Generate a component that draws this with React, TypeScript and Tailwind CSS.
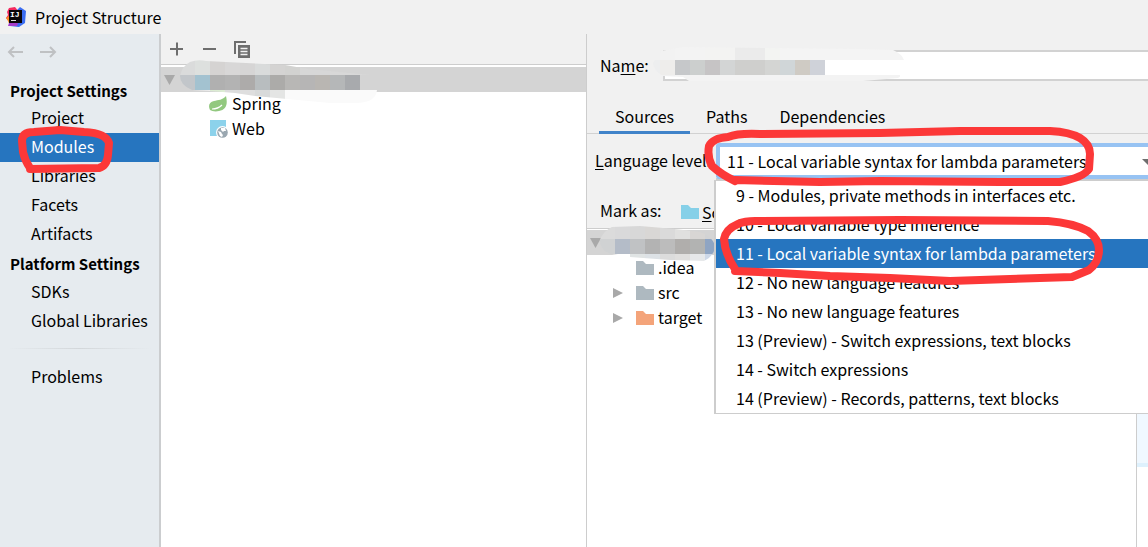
import { useId, useState } from 'react'
import clsx from 'clsx'

const projectSettings = ['Project', 'Modules', 'Libraries', 'Facets', 'Artifacts']
const platformSettings = ['SDKs', 'Global Libraries']
const tabs = ['Sources', 'Paths', 'Dependencies']
const levels = [
    '9 - Modules, private methods in interfaces etc.',
    '10 - Local variable type inference',
    '11 - Local variable syntax for lambda parameters',
    '12 - No new language features',
    '13 - No new language features',
    '13 (Preview) - Switch expressions, text blocks',
    '14 - Switch expressions',
    '14 (Preview) - Records, patterns, text blocks',
]

// Rows of mosaic cells clipped to a hand painted blob: [y, height, first x, colors]
type MosaicRow = [number, number, number, string[]]

function Smudge({ width, height, shape, rows, className }: { width: number; height: number; shape: string; rows: MosaicRow[]; className: string }) {
    const id = useId()
    return (
        <svg aria-hidden="true" width={width} height={height} className={clsx('pointer-events-none absolute max-w-none', className)} shapeRendering="crispEdges">
            <clipPath id={id}><path d={shape} /></clipPath>
            <g clipPath={`url(#${id})`}>
                {rows.map(([y, h, x, colors]) => colors.map((color, i) => (
                    <rect key={`${y}-${i}`} x={x + i * 15} y={y} width={15} height={h} fill={color} />
                )))}
            </g>
        </svg>
    )
}

function IdeaLogo() {
    return (
        <svg width="20" height="20" viewBox="0 0 20 20" aria-hidden="true">
            <path d="M3 1 9 0l4 5-2 11-9-3L0 11l2-3-1-3z" fill="#f5295f" />
            <path d="M0 11 4 8l6 10-6 1-2-5z" fill="#fb8a26" />
            <path d="M11 3 14 0l6 4-1 12-6 4-9-1 7-7z" fill="#3b6cf0" />
            <path d="m2 19 2-6 8 3-1 3z" fill="#a63cc9" />
            <rect x="3" y="3" width="13" height="13" fill="#0a0508" />
            <text x="4" y="10" fontSize="8" fontWeight="700" fill="#fff" fontFamily="Liberation Mono, monospace">IJ</text>
            <path d="M5 13.5h5" stroke="#ddd" strokeWidth="1" />
        </svg>
    )
}

function Arrow({ back }: { back?: boolean }) {
    return (
        <svg width="17" height="14" viewBox="0 0 17 14" fill="none" stroke="#bfc1c3" strokeWidth="2" aria-hidden="true">
            {back ? <path d="M16 7H2M7 2 2 7l5 5" /> : <path d="M0 7h15M10 2l5 5-5 5" />}
        </svg>
    )
}

function CopyIcon() {
    return (
        <svg width="16" height="17" viewBox="0 0 16 17" fill="none" aria-hidden="true">
            <path d="M1 13V1h11" stroke="#6e6e6e" strokeWidth="2" />
            <path d="M4 4h12v13H4z" fill="#6e6e6e" />
            <path d="M6.500 7.500h7M6.500 10.500h7M6.500 13.500h7" stroke="#f1f1f1" strokeWidth="1.500" />
        </svg>
    )
}

function SpringIcon() {
    return (
        <svg width="18" height="16" viewBox="0 0 18 16" aria-hidden="true">
            <path d="M17 0c2 9 0 14-7 15-4 1-7 0-9-1C-1 10 0 6 5 5c4-1 9-1 12-5z" fill="#92c87f" />
            <path d="M3 13c5 0 8-2 10-4" fill="none" stroke="#fff" strokeWidth="1.200" />
        </svg>
    )
}

function WebIcon() {
    return (
        <svg width="18" height="18" viewBox="0 0 18 18" aria-hidden="true">
            <path d="M0 0h16v16H0z" fill="#8cd2eb" />
            <circle cx="12.500" cy="12.500" r="6.500" fill="#fff" />
            <circle cx="12.500" cy="12.500" r="5.300" fill="#9aa7b0" />
            <path d="m8 11 3 1 1 2 1 1-1 2-2-1zM11 8l4 0 1 3-2 0-1 1-2-2z" fill="#fff" />
        </svg>
    )
}

function Folder({ color }: { color: string }) {
    return (
        <svg width="18" height="14" viewBox="0 0 18 14" aria-hidden="true" className="shrink-0">
            <path d="M0 0h7l3 3h8v11H0z" fill={color} />
        </svg>
    )
}

function Caret({ open }: { open?: boolean }) {
    return (
        <svg width="11" height="12" viewBox="0 0 11 12" aria-hidden="true" className="shrink-0">
            <path d={open ? 'M0 1h11L5.500 11z' : 'M1 1v10l10-5z'} fill="#a9a9a9" />
        </svg>
    )
}

function Sidebar() {
    const [active, setActive] = useState('Modules')
    const item = (name: string) => (
        <li key={name}>
            <button onClick={() => setActive(name)} className={clsx('block h-[29px] w-full pb-0.5 pl-[31px] text-left leading-[27px]', active === name && 'bg-[#2675bf] text-white')}>
                {name}
            </button>
        </li>
    )

    return (
        <nav className="w-[161px] shrink-0 border-r-2 border-[#cbcdcf] bg-[#e6ebef]">
            <div className="flex h-[44px] gap-4 px-[7px] pt-[11px]">
                <button aria-label="Back" className="h-[14px]"><Arrow back /></button>
                <button aria-label="Forward" className="h-[14px]"><Arrow /></button>
            </div>
            <h2 className="h-[26px] pl-[10px] text-[15px] font-bold leading-[26px]">Project Settings</h2>
            <ul>{projectSettings.map(item)}</ul>
            <h2 className="h-[29px] pl-[10px] text-[15px] font-bold leading-[29px]">Platform Settings</h2>
            <ul>{platformSettings.map(item)}</ul>
            <div className="mx-2 mt-3 h-px bg-linear-to-r from-transparent via-[#d3d7da] to-transparent" />
            <ul className="mt-[14px]">{item('Problems')}</ul>
        </nav>
    )
}

function ModuleTree() {
    return (
        <section className="flex w-[426px] shrink-0 flex-col border-r border-[#cdcdcd]">
            <div className="flex h-[31px] items-center border-b border-[#cdcdcd] pl-[7px]">
                <button aria-label="Add" className="w-[33px]">
                    <svg width="16" height="14" viewBox="0 0 16 14" stroke="#6e6e6e" strokeWidth="2"><path d="M2 7h13M9 .5v13" /></svg>
                </button>
                <button aria-label="Remove" className="w-[33px]">
                    <svg width="16" height="14" viewBox="0 0 16 14" stroke="#6e6e6e" strokeWidth="2"><path d="M2 7h13" /></svg>
                </button>
                <button aria-label="Copy" className="h-[18px]"><CopyIcon /></button>
            </div>
            <div className="grow bg-white pt-[2px] leading-[25px]">
                <div className="relative flex h-[25px] items-center bg-[#d4d4d4] pl-[3px]">
                    <Caret open />
                    <Smudge
                        className="-top-[7px] left-[19px]"
                        width={200}
                        height={45}
                        shape="M10 2Q18 -1 26 1L105 5L128 9L190 15L190 30L197 30Q196 42 178 43L150 43L75 36L55 33L30 31L12 30Q0 25 0 16Q2 6 10 2Z"
                        rows={[
                            [0, 15, 0, ['#dadbdb', '#dde0de', '#d5d3d2', '#d8d7d7', '#d6d5d5', '#d9dbdb', '#d4d3d2', '#d2d2d0', '#d7d7d7', '#d7d7d7', '#d8d8d8', '#d8d8d8', '#d8d8d8']],
                            [15, 15, 0, ['#c2c6ca', '#a3c2d0', '#b0b0b0', '#b3b3b3', '#adabaa', '#b8bdbf', '#acaba9', '#b8b7b5', '#b6b5b5', '#b9b6b2', '#b5b7b8', '#a8aaad']],
                            [30, 15, 0, ['#ededed', '#ededed', '#dcecd3', '#dcdcdc', '#dedede', '#d8dada', '#e4e5e4', '#fafafa', '#fafafa', '#fafafa', '#fafafa', '#fafafa', '#fafafa', '#fafafa']],
                        ]}
                    />
                </div>
                <div className="relative flex h-[25px] items-center gap-[5px] pb-0.5 pl-12"><SpringIcon />Spring</div>
                <div className="flex h-[25px] items-center gap-1 pb-0.5 pl-[49px]"><WebIcon />Web</div>
            </div>
        </section>
    )
}

function LanguageLevel() {
    const [level, setLevel] = useState(levels[2])
    return (
        <div className="mt-2 flex h-[38px] items-center pl-2">
            <label htmlFor="level" className="w-[121px] shrink-0 pb-0.5"><u className="underline-offset-2">L</u>anguage level:</label>
            <div className="relative h-[38px] grow border-b-2 border-[#cdcdcd]">
                <select
                    id="level"
                    value={level}
                    onChange={(e) => setLevel(e.target.value)}
                    className="mt-px h-[36px] w-full appearance-none rounded-l-sm border-4 border-r-0 border-[#97c3f3] bg-white pl-[7px] outline-none"
                >
                    {levels.map((name) => <option key={name}>{name}</option>)}
                </select>
                <svg width="6" height="6" viewBox="0 0 6 6" className="pointer-events-none absolute top-[17px] right-0" aria-hidden="true">
                    <path d="M0 0h12L6 6z" fill="#6e6e6e" />
                </svg>
                <ul className="absolute top-[38px] right-0 -left-[2px] z-10 border border-r-0 border-l-2 border-[#cdcdcd] bg-white">
                    {levels.map((name) => (
                        <li key={name}>
                            <button onClick={() => setLevel(name)} className={clsx('block h-[29px] w-full pl-5 text-left', level === name && 'bg-[#2675bf] text-white')}>
                                {name}
                            </button>
                        </li>
                    ))}
                </ul>
            </div>
        </div>
    )
}

function ModuleEditor() {
    const [tab, setTab] = useState('Sources')
    return (
        <section className="flex min-w-0 grow flex-col">
            <div className="relative mt-4 flex h-[31px] items-center pl-[13px]">
                <label htmlFor="name" className="w-[63px] shrink-0">Na<u className="underline-offset-2">m</u>e:</label>
                <input id="name" className="h-[31px] min-w-0 grow border-2 border-r-0 border-[#d2d2d2] bg-white px-2 outline-none" />
                <Smudge
                    className="-top-[4px] left-[66px]"
                    width={252}
                    height={35}
                    shape="M8 5L30 1L210 3L240 4Q249 8 251 14L251 28L245 32L210 35L36 35L30 31L10 30Q0 24 0 17Z"
                    rows={[
                        [0, 14, 7, ['#f2f2f2', '#f3f3f3', '#f3f3f3', '#f3f3f2', '#f3f3f2', '#ebebeb', '#ebebeb', '#f3f4f2', '#f4f4f4', '#f4f4f4', '#f4f4f4', '#f4f4f4', '#f4f4f4', '#f4f4f4', '#f4f4f4', '#f4f4f4', '#f4f4f4']],
                        [14, 15, -8, ['#edeeef', '#eeedeb', '#c6c8ca', '#cccfce', '#c6c4c5', '#d3d5d5', '#cfcfcd', '#cfcfcd', '#d4d5d3', '#d0d6d8', '#cfcbc4', '#cfd2d9', '#fff', '#fff', '#fff', '#fff', '#fff', '#fff']],
                        [29, 6, -8, ['#f1f1f1', '#f1f1f1', '#f3f3f3', '#f3f3f3', '#f3f3f3', '#f3f3f3', '#f3f3f3', '#f3f3f3', '#f3f3f3', '#f3f3f3', '#f3f3f3', '#f3f3f3', '#f3f3f3', '#f3f3f3', '#f3f3f3', '#f3f3f3', '#f3f3f3']],
                    ]}
                />
            </div>
            <div className="mt-5 flex h-[33px] border-b border-[#d2d2d2] pl-3" role="tablist">
                {tabs.map((name) => (
                    <button
                        key={name}
                        role="tab"
                        aria-selected={tab === name}
                        onClick={() => setTab(name)}
                        className={clsx('h-[33px] border-b-3 px-4', tab === name ? 'border-[#4083c9]' : 'border-transparent')}
                    >
                        {name}
                    </button>
                ))}
            </div>
            <LanguageLevel />
            <div className="flex h-[48px] items-end pb-[3px] pl-[13px]">
                <span className="w-[81px]">Mark as:</span>
                <button className="flex items-center gap-[3px] leading-[26px]"><Folder color="#86d0e8" /><span><u className="underline-offset-2">S</u>ources</span></button>
            </div>
            <div className="flex grow border-t border-[#cdcdcd] bg-white leading-[25px]">
                <div className="grow border-r border-[#cdcdcd] pt-px">
                    <div className="relative flex h-[25px] items-center bg-[#d4d4d4] pl-[3px]">
                        <Caret open />
                        <Smudge
                            className="-top-[4px] left-[13px]"
                            width={116}
                            height={36}
                            shape="M12 1L40 0L75 3L100 6Q115 12 115 22Q113 31 104 35L70 34L30 31L12 28Q0 25 0 14Q3 5 12 1Z"
                            rows={[
                                [0, 13, 0, ['#dbdbdb', '#d9d9da', '#d8d8d8', '#d9d7d5', '#dadada', '#e0e0df', '#d8d6d4', '#d2d3d4']],
                                [13, 15, 0, ['#d0d2d3', '#b4bcc8', '#c0c2c4', '#b3b3b3', '#bcbcbc', '#b0aeac', '#b2b3b2', '#8fa5c3']],
                                [28, 8, 0, ['#fff', '#fff', '#e0e4e4', '#dde2e6', '#dcdcdc', '#e0dfde', '#e6e8ea', '#cdd8e8']],
                            ]}
                        />
                    </div>
                    <div className="flex h-[25px] items-center gap-1 pl-[49px]"><Folder color="#aeb9c0" />.idea</div>
                    <div className="flex h-[25px] items-center gap-1 pl-[25px]"><Caret /><span className="w-[5px]" /><Folder color="#aeb9c0" />src</div>
                    <div className="flex h-[25px] items-center gap-1 pl-[25px]"><Caret /><span className="w-[5px]" /><Folder color="#f4a47a" />target</div>
                </div>
                <div className="w-[11px] shrink-0">
                    <div className="h-[238px] border-b-4 border-[#def1fd] bg-[#f0f8ff]" />
                </div>
            </div>
        </section>
    )
}

// Red pen rings round the selected module entry and the language level
function Marks() {
    return (
        <svg width="1148" height="300" className="pointer-events-none absolute top-0 left-0 z-20 max-w-none" fill="none" stroke="#fc3838" strokeWidth="8" strokeLinecap="round" strokeLinejoin="round" aria-hidden="true">
            <path d="M30 168Q25 161 23 152L22 141Q22 132 34 132L60 130 84 132Q106 133 109 143L108 155Q107 166 99 168L30 169" />
            <path d="M735 181Q722 175 712 166Q707 157 709 146Q713 138 728 137Q738 133 760 134L880 133 960 131 1050 131Q1070 132 1080 138Q1090 144 1090 154L1089 169Q1084 177 1060 182L1000 182 880 181 820 182 735 180" />
            <path d="M735 269Q725 254 724 239Q726 229 738 224Q745 221 755 221L900 220 1048 221Q1073 223 1088 231Q1099 239 1099 250Q1099 262 1089 270L1072 277 1010 279 950 281 890 278 830 276 780 273 735 271" />
        </svg>
    )
}

export default function App() {
    return (
        <div className="relative flex min-h-screen flex-col overflow-hidden bg-[#f1f1f1] font-['Noto_Sans_CJK_SC','Open_Sans',sans-serif] text-base leading-[29px] text-black">
            <header className="flex h-[34px] items-center gap-[9px] pl-[6px]">
                <IdeaLogo />
                <h1>Project Structure</h1>
            </header>
            <main className="flex grow">
                <Sidebar />
                <ModuleTree />
                <ModuleEditor />
            </main>
            <Marks />
        </div>
    )
}
